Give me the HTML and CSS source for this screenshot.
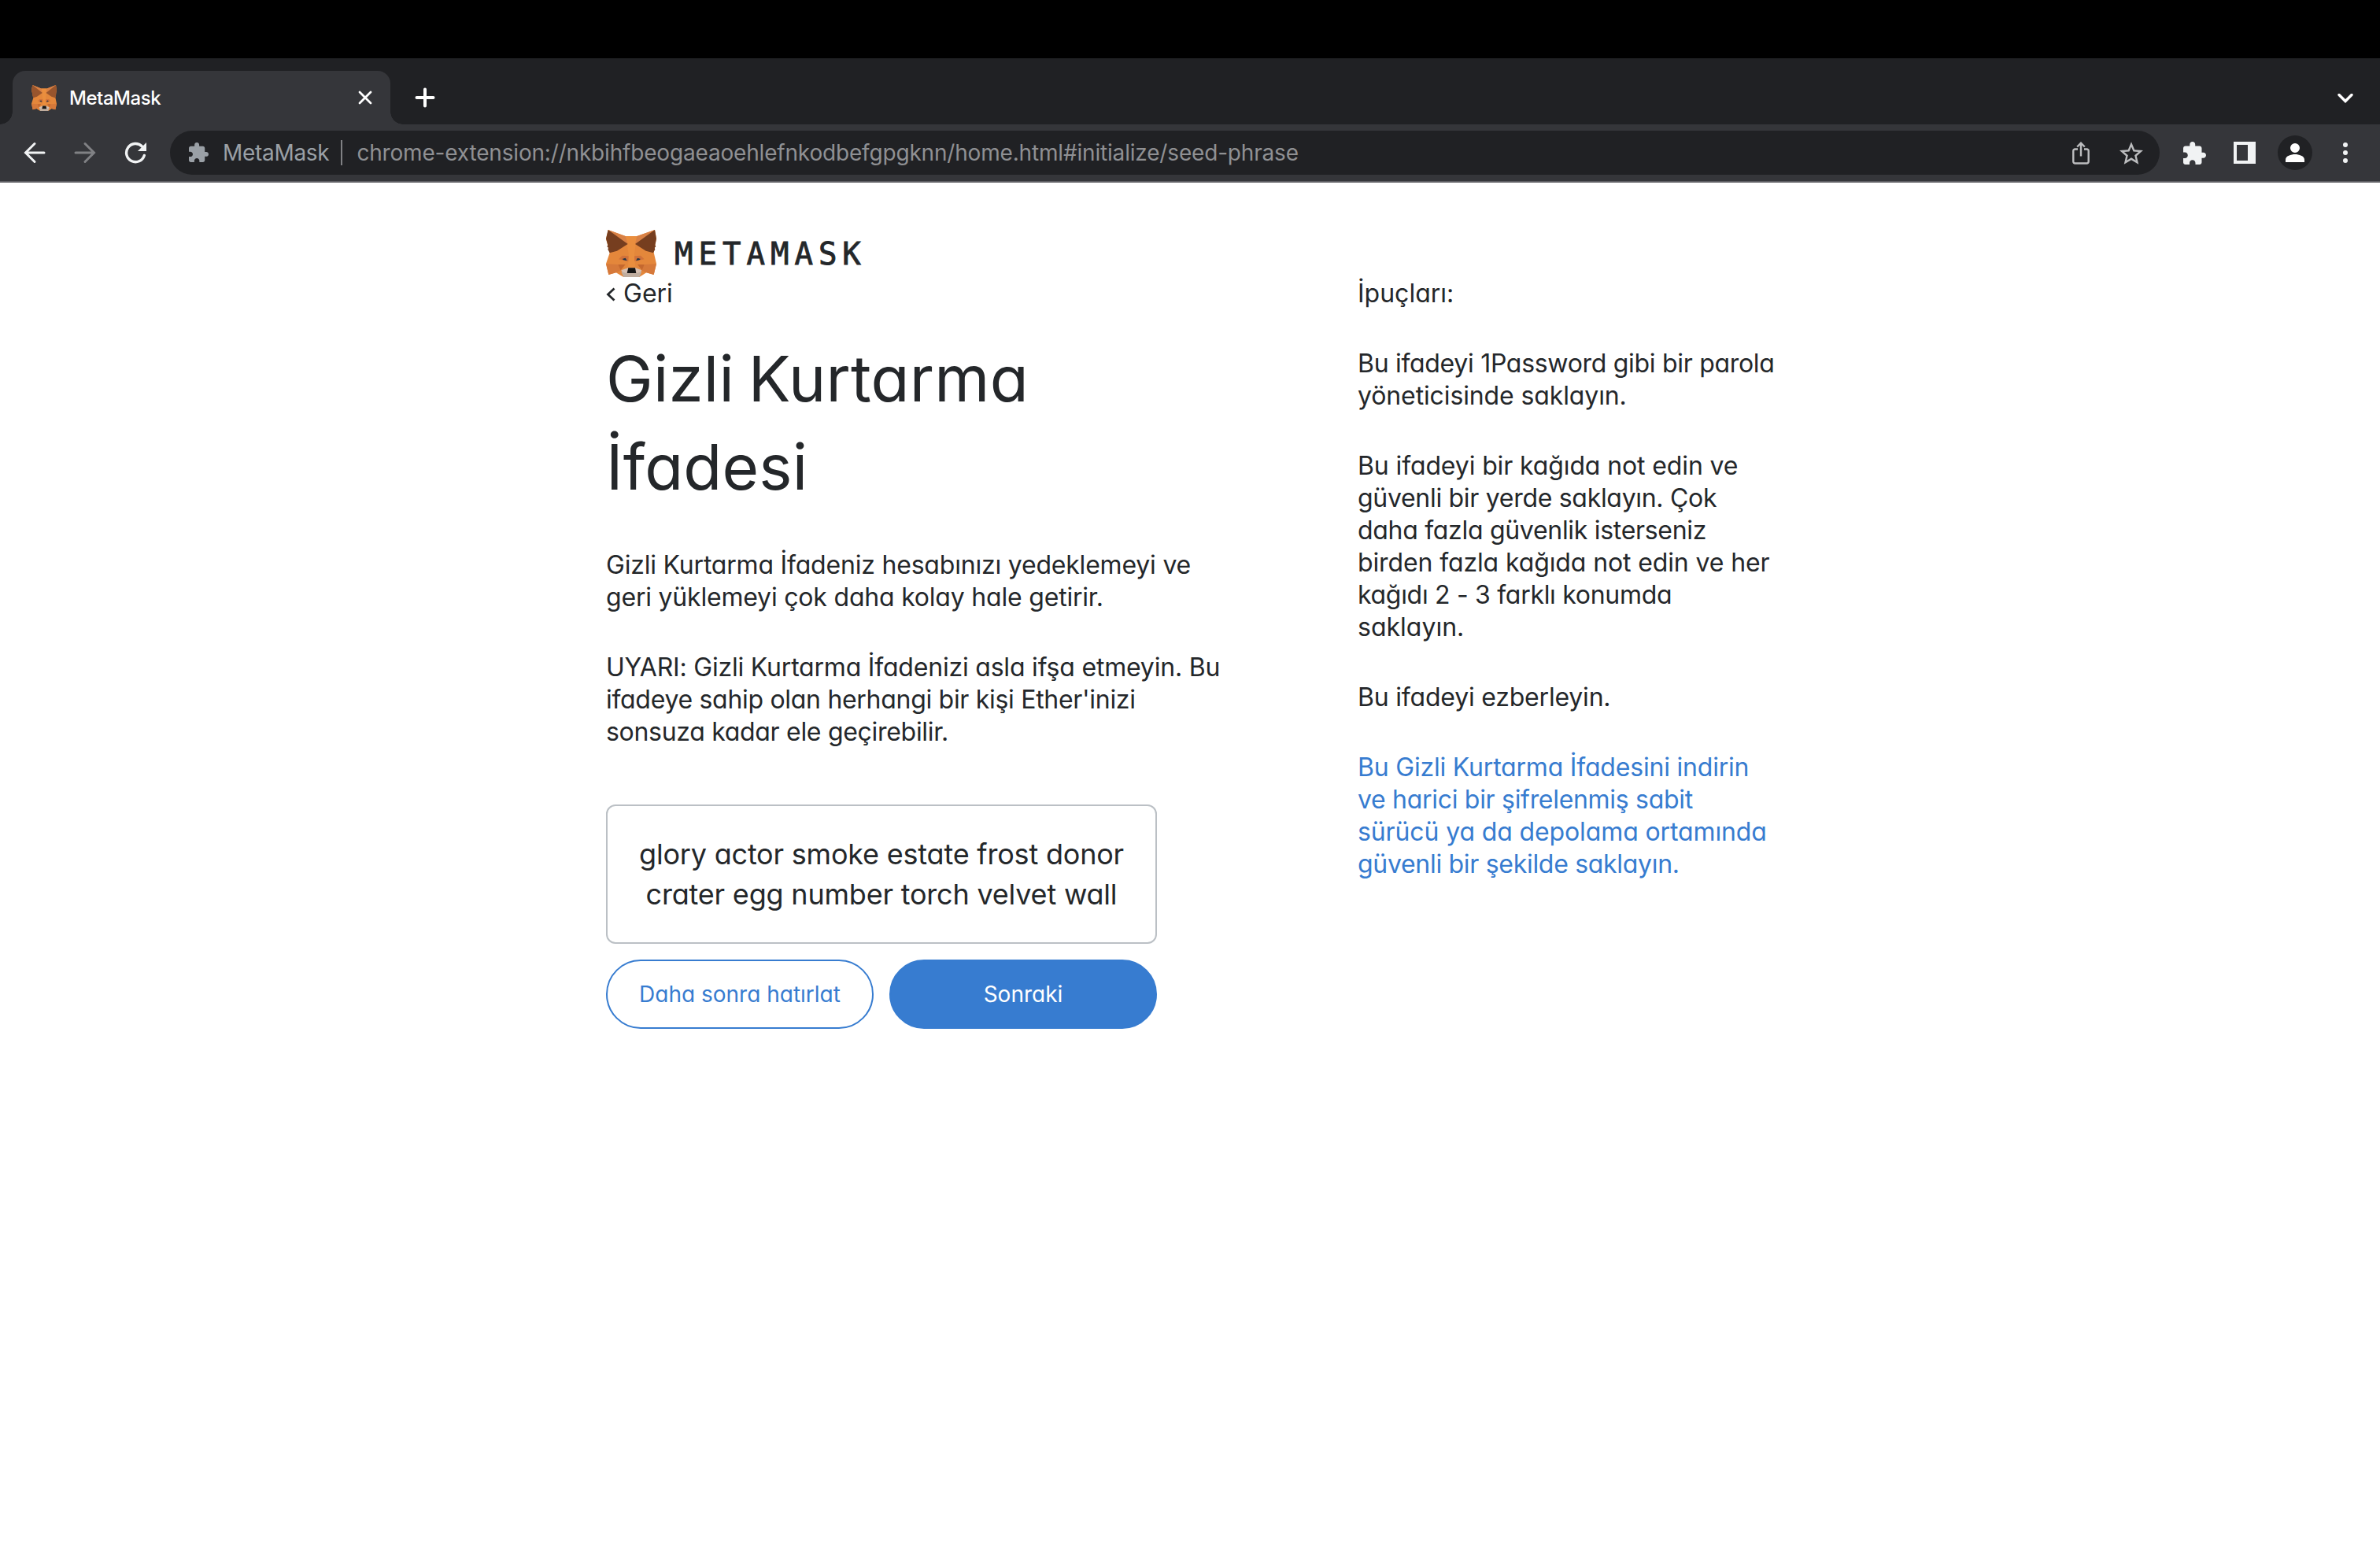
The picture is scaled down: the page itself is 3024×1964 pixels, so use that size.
FILE: index.html
```
<!DOCTYPE html>
<html lang="tr">
<head>
<meta charset="utf-8">
<title>MetaMask</title>
<link rel="stylesheet" href="styles.css">
</head>
<body>
<svg class="defs" aria-hidden="true">
  <symbol id="fox" viewBox="18 18 192 180" preserveAspectRatio="none">
    <path fill="#e4873b" d="M26 18 92 42H136L204 18 210 52 200 104 210 147 200 189 172 181 145 198H85L56 181 28 189 18 147 32 106 18 52Z"/>
    <path fill="#ea8e3e" d="M92 42H136L126 108 130 163H102L104 108Z"/>
    <path fill="#d98145" d="M26 18 92 42 101 72ZM204 18 136 42 129 72Z"/>
    <path class="ear" d="M26 18 101 72 60 98 32 106 25 92 27 86 22 82 25 76 18 52ZM204 18 129 72 170 98 198 106 205 92 203 86 208 82 205 76 210 52Z"/>
    <path fill="#d6793a" d="M18 148 64 150 76 172 56 181 28 189ZM210 148 164 150 152 172 172 181 200 189Z"/>
    <path fill="#c4682f" d="M64 150 92 150 74 172ZM164 150 138 150 155 172Z"/>
    <path fill="#d0713a" d="M80 116 104 118 103 138 66 130ZM150 116 126 118 127 138 164 130Z"/>
    <path fill="#233447" d="M80 129 92 125 98 136 85 133ZM150 129 138 125 132 136 145 133Z"/>
    <path fill="#d5bfb2" d="M76 172 102 163H130L154 172 145 189H85Z"/>
    <path fill="#bfad9f" d="M76 178 98 184H133L154 178 145 198H85Z"/>
    <path fill="#161616" d="M103 163H129L133 183H98Z"/>
  </symbol>
  <symbol id="puzzle" viewBox="2 1 21 21">
    <path d="M20.500 11H19V7c0-1.100-.9-2-2-2h-4V3.500C13 2.120 11.880 1 10.500 1S8 2.120 8 3.500V5H4c-1.100 0-1.990.9-1.990 2v3.800H3.500c1.490 0 2.700 1.210 2.700 2.700s-1.210 2.700-2.700 2.700H2V20c0 1.100.9 2 2 2h3.800v-1.500c0-1.490 1.210-2.700 2.700-2.700 1.490 0 2.700 1.210 2.700 2.700V22H17c1.100 0 2-.9 2-2v-4h1.500c1.380 0 2.500-1.120 2.500-2.500S21.880 11 20.500 11z"/>
  </symbol>
</svg>

<div class="notch"></div>
<div class="tabstrip">
  <div class="tab">
    <svg class="favicon"><use href="#fox"/></svg>
    <span class="tab-title">MetaMask</span>
    <svg class="close" viewBox="0 0 18 18"><path d="M2 2 16 16M16 2 2 16"/></svg>
  </div>
  <svg class="new-tab" viewBox="0 0 26 26"><path d="M13 2.500V23.500M2.500 13H23.500"/></svg>
  <svg class="chevron" viewBox="0 0 20 12"><path d="M2 1.500 10 9.500 18 1.500"/></svg>
</div>
<div class="toolbar">
  <svg class="nav back" viewBox="0 0 28 28"><path d="M26 14H3M14 2.500 2.500 14 14 25.500"/></svg>
  <svg class="nav forward" viewBox="0 0 28 28"><path d="M2 14H25M14 2.500 25.500 14 14 25.500"/></svg>
  <svg class="nav reload" viewBox="0 0 28 28"><path d="M25.300 17.500A11.600 11.600 0 1 1 22.500 6"/><path class="tip" d="M28 1V12H17Z"/></svg>
  <div class="omnibox">
    <svg class="site-icon"><use href="#puzzle"/></svg>
    <span class="site-name">MetaMask</span>
    <span class="divider"></span>
    <span class="url">chrome-extension://nkbihfbeogaeaoehlefnkodbefgpgknn/home.html#initialize/seed-phrase</span>
    <svg class="share" viewBox="0 0 22 29"><path d="M7 9.500H3.500A2.200 2.200 0 0 0 1.300 11.700V25.300A2.200 2.200 0 0 0 3.500 27.500H18.500A2.200 2.200 0 0 0 20.700 25.300V11.700A2.200 2.200 0 0 0 18.500 9.500H15M11 18.500V2M6.200 6.500 11 1.700 15.800 6.500"/></svg>
    <svg class="star" viewBox="2 2 20 19"><path d="M22 9.240l-7.190-.62L12 2 9.190 8.630 2 9.240l5.460 4.730L5.820 21 12 17.270 18.180 21l-1.630-7.030L22 9.240zM12 15.400l-3.760 2.270 1-4.280-3.320-2.880 4.380-.38L12 6.100l1.710 4.040 4.380.38-3.320 2.880 1 4.280L12 15.400z"/></svg>
  </div>
  <svg class="extensions"><use href="#puzzle"/></svg>
  <span class="panel"></span>
  <svg class="avatar" viewBox="0 0 44 44"><circle cx="22" cy="22" r="22"/><path class="person" d="M22 10A6 6 0 1 1 22 22 6 6 0 0 1 22 10ZM10 34V31C10 26 17 24 22 24S34 26 34 31V34Z"/></svg>
  <svg class="menu" viewBox="0 0 6 26"><circle cx="3" cy="3" r="3"/><circle cx="3" cy="13" r="3"/><circle cx="3" cy="23" r="3"/></svg>
</div>

<main class="page">
  <header class="brand">
    <svg class="logo"><use href="#fox"/></svg>
    <span class="wordmark">METAMASK</span>
  </header>
  <div class="columns">
    <section class="phrase">
      <a class="back-link"><svg viewBox="0 0 12 18"><path d="M10.500 1.500 2.500 9 10.500 16.500"/></svg><span>Geri</span></a>
      <h1>Gizli Kurtarma<br>İfadesi</h1>
      <p>
        <span class="snug">Gizli Kurtarma İfadeniz hesabınızı yedeklemeyi ve</span><br>
        <span class="snug">geri yüklemeyi çok daha kolay hale getirir.</span>
      </p>
      <p>
        <span class="snug">UYARI: Gizli Kurtarma İfadenizi asla ifşa etmeyin. Bu</span><br>
        <span class="tight">ifadeye sahip olan herhangi bir kişi Ether'inizi</span><br>
        <span class="tight">sonsuza kadar ele geçirebilir.</span>
      </p>
      <div class="seed snug">glory actor smoke estate frost donor<br>crater egg number torch velvet wall</div>
      <div class="actions">
        <button class="btn later">Daha sonra hatırlat</button>
        <button class="btn next">Sonraki</button>
      </div>
    </section>
    <aside class="tips">
      <p>İpuçları:</p>
      <p>
        <span class="tight">Bu ifadeyi 1Password gibi bir parola</span><br>
        <span class="close-set">yöneticisinde saklayın.</span>
      </p>
      <p>
        <span class="close-set">Bu ifadeyi bir kağıda not edin ve</span><br>
        <span class="tight">güvenli bir yerde saklayın. Çok</span><br>
        <span class="tight">daha fazla güvenlik isterseniz</span><br>
        <span class="close-set">birden fazla kağıda not edin ve her</span><br>
        <span class="tight">kağıdı 2 - 3 farklı konumda</span><br>
        <span>saklayın.</span>
      </p>
      <p><span class="snug">Bu ifadeyi ezberleyin.</span></p>
      <p class="link">
        <span class="snug">Bu Gizli Kurtarma İfadesini indirin</span><br>
        <span class="tight">ve harici bir şifrelenmiş sabit</span><br>
        <span class="close-set">sürücü ya da depolama ortamında</span><br>
        <span class="tight">güvenli bir şekilde saklayın.</span>
      </p>
    </aside>
  </div>
</main>
</body>
</html>
```
FILE: styles.css
```
* { box-sizing: border-box; }

body {
  margin: 0;
  background: #fff;
  color: #24272a;
  font-family: Inter, "Liberation Sans", sans-serif;
}

svg { display: block; flex: none; }

.defs { position: absolute; width: 0; height: 0; }

/* Browser frame */
.notch { height: 74px; background: #000; }

.tabstrip {
  display: flex;
  height: 84px;
  padding: 16px 34px 0 16px;
  background: #202124;
}

.tab {
  position: relative;
  display: flex;
  align-items: center;
  width: 480px;
  height: 68px;
  padding: 0 23px 0 24px;
  border-radius: 16px 16px 0 0;
  background: #35363a;
  color: #fff;
}

.tab::before,
.tab::after {
  content: "";
  position: absolute;
  bottom: 0;
  width: 16px;
  height: 16px;
}

.tab::before {
  left: -16px;
  background: radial-gradient(circle at 0 0, #202124 15.5px, #35363a 16px);
}

.tab::after {
  right: -16px;
  background: radial-gradient(circle at 100% 0, #202124 15.5px, #35363a 16px);
}

.favicon { width: 32px; height: 33px; color: #98552d; }
.logo { color: #763e1f; }
.ear { fill: currentColor; }

.tab-title {
  flex: 1;
  margin-left: 16px;
  font-size: 24px;
  font-weight: 450;
  letter-spacing: -0.45px;
}

.close { width: 18px; height: 18px; fill: none; stroke: #fff; stroke-width: 2.8; stroke-linecap: round; }

.new-tab {
  width: 26px;
  height: 26px;
  margin: 21px auto 0 31px;
  fill: none;
  stroke: #fff;
  stroke-width: 4;
  stroke-linecap: round;
}

.chevron {
  width: 20px;
  height: 12px;
  margin-top: 29px;
  fill: none;
  stroke: #fff;
  stroke-width: 3.4;
  stroke-linecap: round;
}

.toolbar {
  display: flex;
  align-items: center;
  height: 74px;
  padding: 0 41px 0 30px;
  border-bottom: 2px solid #5f5f64;
  background: #35363a;
}

.nav { width: 28px; height: 28px; fill: none; stroke: #f1f3f4; stroke-width: 3; stroke-linecap: round; }
.forward { margin-left: 36px; stroke: #808184; }
.reload { margin: 0 30px 0 36px; stroke-width: 3.4; }
.tip { fill: #f1f3f4; stroke: none; }

.omnibox {
  display: flex;
  align-items: center;
  width: 2528px;
  height: 56px;
  padding: 0 21px 0 24px;
  border-radius: 28px;
  background: #202124;
  font-size: 28px;
  white-space: nowrap;
}

.site-icon { width: 25px; height: 25px; margin-top: -2px; fill: #9aa0a6; }
.site-name { margin-left: 18px; color: #9aa0a6; letter-spacing: -0.3px; }
.divider { width: 2px; height: 32px; margin: 0 18px 0 15px; background: #808184; }
.url { margin-right: auto; color: #8f9093; letter-spacing: -0.18px; }
.share { width: 22px; height: 29px; margin-right: 38px; fill: none; stroke: #bcbdbf; stroke-width: 2.4; }
.star { width: 30px; height: 29px; fill: #bcbdbf; }

.extensions { width: 29px; height: 29px; margin: 0 35px 0 30px; fill: #f1f3f4; }
.panel { width: 28px; height: 28px; border: 4px solid #f1f3f4; border-right-width: 10px; }
.avatar { width: 44px; height: 44px; margin: 0 39px 0 28px; fill: #202124; }
.person { fill: #fff; }
.menu { width: 6px; height: 26px; fill: #f1f3f4; }

/* Page */
.page {
  padding: 60px 0 0 770px;
  font-size: 32px;
  line-height: 41px;
  font-feature-settings: "cv11";
}

.brand { display: flex; align-items: center; height: 60px; }
.logo { width: 64px; height: 60px; }

.wordmark {
  margin-left: 23px;
  font-family: "DejaVu Sans Mono", monospace;
  font-size: 39px;
  letter-spacing: 7px;
  -webkit-text-stroke: 0.9px currentColor;
}

.columns {
  display: grid;
  grid-template-columns: 955px 560px;
  white-space: nowrap;
}

.back-link { display: flex; align-items: center; }

.back-link svg {
  width: 12px;
  height: 18px;
  margin: 2px 10px 0 0;
  fill: none;
  stroke: #24272a;
  stroke-width: 2.8;
}

h1 {
  margin: 32px 0 48px;
  font-size: 80px;
  font-weight: 400;
  line-height: 112px;
  letter-spacing: 0.2px;
  word-spacing: -5px;
}

p { margin: 0 0 48px; }

/* Letter fitting */
.close-set { letter-spacing: -0.12px; }
.snug { letter-spacing: -0.2px; }
.tight { letter-spacing: -0.3px; }

.seed {
  width: 700px;
  height: 177px;
  margin-top: 72px;
  padding-top: 36px;
  border: 2px solid #bbc0c5;
  border-radius: 12px;
  font-size: 36px;
  line-height: 51px;
  text-align: center;
}

.actions { display: flex; gap: 20px; margin-top: 20px; }

.btn {
  width: 340px;
  height: 88px;
  padding: 0;
  border: 2px solid #377cd0;
  border-radius: 44px;
  background: #fff;
  color: #377cd0;
  font: inherit;
  font-size: 28px;
  font-feature-settings: "cv11";
}

.next { background: #377cd0; color: #fff; }
.link { color: #377cd0; }
```
